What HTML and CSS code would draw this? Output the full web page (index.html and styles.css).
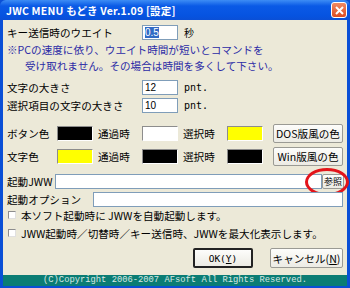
FILE: index.html
```html
<!DOCTYPE html>
<html lang="ja">
<head>
    <meta charset="UTF-8">
    <title>JWC MENU もどき Ver.1.09 [設定]</title>
    <link rel="stylesheet" href="styles.css">
</head>
<body>

<div class="window">
    <div class="titlebar">
        <span class="title">JWC MENU もどき Ver.1.09 [設定]</span>
        <span class="close">
            <svg width="9" height="9" viewBox="0 0 9 9"><path d="M1 1L8 8M8 1L1 8" stroke="#fff" stroke-width="2"/></svg>
        </span>
    </div>

    <div class="content">
        <div class="row first">
            <span class="label">キー送信時のウエイト</span>
            <span class="field small"><span class="sel">0.5</span></span>
            <span class="unit">秒</span>
        </div>

        <div class="note">
            <p>※PCの速度に依り、ウエイト時間が短いとコマンドを</p>
            <p class="indent">受け取れません。その場合は時間を多くして下さい。</p>
        </div>

        <div class="row size">
            <span class="label">文字の大きさ</span>
            <span class="field small">12</span>
            <span class="unit">pnt.</span>
        </div>
        <div class="row size2">
            <span class="label">選択項目の文字の大きさ</span>
            <span class="field small">10</span>
            <span class="unit">pnt.</span>
        </div>

        <div class="colors first-c">
            <span class="clabel">ボタン色</span>
            <span class="swatch black"></span>
            <span class="mid">通過時</span>
            <span class="swatch white"></span>
            <span class="mid sel-l">選択時</span>
            <span class="swatch yellow"></span>
            <button class="btn preset">DOS版風の色</button>
        </div>
        <div class="colors second-c">
            <span class="clabel">文字色</span>
            <span class="swatch yellow"></span>
            <span class="mid">通過時</span>
            <span class="swatch black"></span>
            <span class="mid sel-l">選択時</span>
            <span class="swatch black"></span>
            <button class="btn preset">Win版風の色</button>
        </div>

        <div class="row jww">
            <span class="jlabel">起動JWW</span>
            <span class="field wide"></span>
            <button class="btn browse">参照</button>
            <span class="ring"></span>
        </div>
        <div class="row opt">
            <span class="olabel">起動オプション</span>
            <span class="field wide"></span>
        </div>

        <div class="check c1"><span class="box"></span>本ソフト起動時に JWWを自動起動します。</div>
        <div class="check c2"><span class="box"></span>JWW起動時／切替時／キー送信時、JWWを最大化表示します。</div>

        <div class="actions">
            <button class="btn ok">OK(<u>Y</u>)</button>
            <button class="btn cancel">キャンセル(<u>N</u>)</button>
        </div>
    </div>

    <div class="status">(C)Copyright 2006-2007 AFsoft All Rights Reserved.</div>
</div>

</body>
</html>
```

FILE: styles.css
```css
body {
    margin: 0;
    width: 350px;
    height: 288px;
    overflow: hidden;
    font-family: "Noto Sans CJK JP", "DejaVu Sans", sans-serif;
}
.window {
    width: 350px;
    height: 288px;
    box-sizing: border-box;
    background: #0a4fd6;
    padding: 0 3px 2px 3px;
    display: flex;
    flex-direction: column;
}
.titlebar {
    height: 20px;
    margin: 0 -3px;
    padding: 0 3px 0 6px;
    background: linear-gradient(#3d8df5, #0a5ae6 30%, #0653e0 80%, #0a4fd6);
    border-radius: 6px 6px 0 0;
    display: flex;
    align-items: center;
    justify-content: space-between;
}
.title {
    color: #fff;
    font-weight: bold;
    font-size: 10.5px;
    letter-spacing: 0.2px;
}
.close {
    width: 14px;
    height: 14px;
    border: 1px solid #fff;
    border-radius: 3px;
    background: linear-gradient(#f08a64, #dd4c22);
    display: flex;
    align-items: center;
    justify-content: center;
    margin-right: 0px;
}
.content {
    flex: 1;
    background: #ece9d8;
    padding-left: 4px;
    font-size: 10.6px;
    color: #000;
    display: flex;
    flex-direction: column;
}
.row {
    display: flex;
    align-items: center;
    height: 15px;
    position: relative;
}
.label {
    width: 135px;
}
.field {
    height: 15px;
    box-sizing: border-box;
    background: #fff;
    border: 1px solid #7f9db9;
    font-size: 10px;
    line-height: 13px;
    padding-left: 2px;
    font-family: "Liberation Sans", sans-serif;
}
.field.small {
    width: 36px;
}
.sel {
    background: #316ac5;
    color: #fff;
}
.unit {
    margin-left: 6px;
    font-family: "DejaVu Sans Mono", "Noto Sans CJK JP", monospace;
    font-size: 10px;
}
.first { margin-top: 5px; }
.note {
    margin-top: 2px;
    color: #2b2ba6;
    line-height: 16px;
}
.note p { margin: 0; }
.note .indent { padding-left: 18px; }
.size { margin-top: 6px; }
.size2 { margin-top: 3px; }

.colors {
    display: flex;
    align-items: center;
    height: 19px;
}
.first-c { margin-top: 11px; }
.second-c { margin-top: 4px; }
.clabel { width: 50px; }
.mid { width: 49px; padding-left: 5px; box-sizing: border-box; }
.swatch {
    width: 36px;
    height: 15px;
    box-sizing: border-box;
    border: 1px solid #8d8d8d;
    border-right-color: #fff;
    border-bottom-color: #fff;
}
.black { background: #000; }
.white { background: #fff; }
.yellow { background: #ffff00; }

.btn {
    font-family: "Noto Sans CJK JP", sans-serif;
    font-size: 10.6px;
    padding: 0;
    background: linear-gradient(#fdfdfb, #ecebe4);
    border: 1px solid #9a9a94;
    border-radius: 2px;
    color: #000;
}
.preset {
    margin-left: 10px;
    width: 70px;
    height: 19px;
}
.jww { margin-top: 8px; }
.jlabel { width: 48px; }
.jww .field.wide { width: 267px; }
.browse {
    width: 22px;
    height: 15px;
    font-size: 9px;
    line-height: 13px;
    margin-left: 0px;
}
.ring {
    position: absolute;
    left: 298px;
    top: -6px;
    width: 44px;
    height: 28px;
    box-sizing: border-box;
    border: 3px solid #e3141a;
    border-radius: 50%;
}
.opt { margin-top: 3px; }
.olabel { width: 86px; }
.opt .field.wide { width: 250px; }

.check {
    display: flex;
    align-items: center;
    height: 14px;
    padding-left: 1px;
}
.c1 { margin-top: 1px; }
.c2 { margin-top: 4px; }
.box {
    width: 8px;
    height: 8px;
    box-sizing: border-box;
    background: #fff;
    border: 1px solid #8d8d8d;
    border-right-color: #e0e0e0;
    border-bottom-color: #e0e0e0;
    margin-right: 5px;
}

.actions {
    margin-top: 8px;
    display: flex;
    justify-content: flex-end;
    padding-right: 4px;
}
.ok {
    width: 60px;
    height: 20px;
    border: 2px solid #222;
    font-family: "DejaVu Sans Mono", monospace;
    font-size: 9.5px;
}
.cancel {
    width: 73px;
    height: 20px;
    margin-left: 17px;
}
.status {
    height: 11px;
    background: #0b7d74;
    color: #d9e8e4;
    font-family: "Liberation Mono", monospace;
    font-size: 8.8px;
    line-height: 11px;
    text-align: center;
    white-space: nowrap;
}
```
